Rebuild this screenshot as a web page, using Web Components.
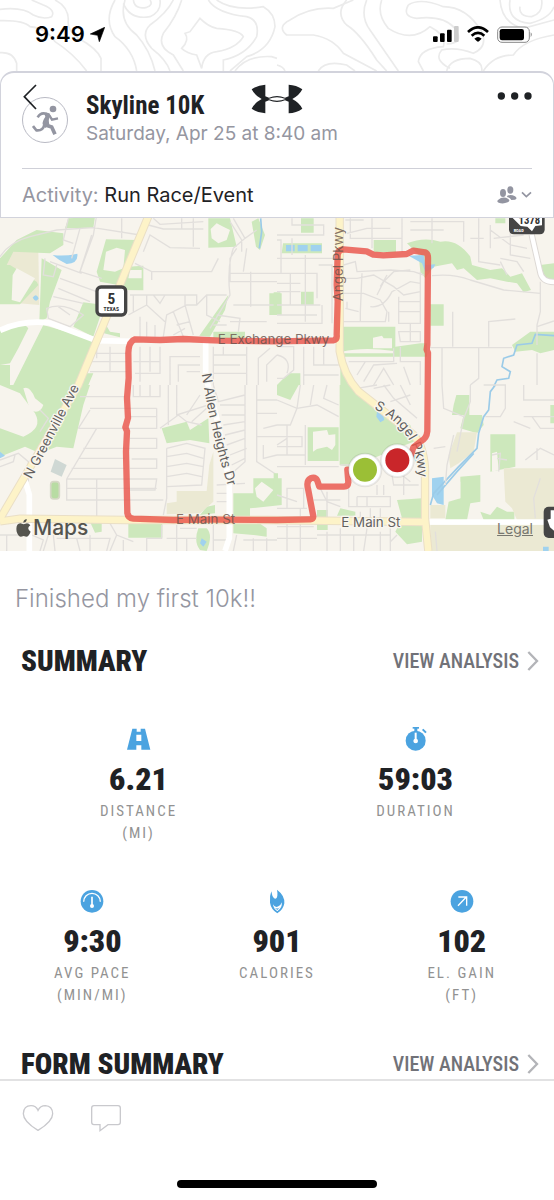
<!DOCTYPE html>
<html lang="en">
<head>
<meta charset="utf-8">
<meta name="viewport" content="width=device-width, initial-scale=1">
<title>Skyline 10K</title>
<style>
    html, body {
        margin: 0;
        height: 100%;
    }

    body {
        background: #fff;
        color: #1f2225;
        font-family: Inter, "Liberation Sans", sans-serif;
        --narrow: "Roboto Condensed", "Liberation Sans Narrow", "Open Sans Condensed", "Liberation Sans", sans-serif;
        --muted: #9596a1;
    }
</style>
</head>
<body>
<workout-page></workout-page>

<script>
// Attach an open shadow root and fill it from a template
function render(host, html) {
    const template = document.createElement('template');
    template.innerHTML = html;
    host.attachShadow({ mode: 'open' }).appendChild(template.content.cloneNode(true));
}

// Icon shapes, each with its own display size and viewBox
const icons = {
    location: [15, 15, '0 0 45 45', '<path d="M44 1 L28 44 L23 25 L1 21 Z" fill="#000" stroke="#000" stroke-width="2" stroke-linejoin="round"/>'],
    signal: [26, 16, '0 0 78 48', '<rect y="31" width="14" height="17" rx="3"/><rect x="21" y="22" width="14" height="26" rx="3"/><rect x="42" y="11" width="14" height="37" rx="3"/><rect x="63" width="14" height="48" rx="3" fill="#ccc"/>'],
    wifi: [22, 16, '0 0 66 48', '<g fill="none" stroke="#000" stroke-width="8"><path d="M3 18 Q33 -10 63 18"/><path d="M14 29 Q33 12 52 29"/></g><path d="M22 38 Q33 28 44 38 L36 46 Q33 48 30 46 Z"/>'],
    battery: [36, 17, '0 0 108 51', '<rect x="2" y="3" width="95" height="46" rx="13" fill="#fff" stroke="#8a8a8a" stroke-width="3"/><rect x="8" y="9" width="73" height="34" rx="7"/><path d="M101 19 Q108 25 101 34 Z" fill="#8a8a8a"/>'],
    back: [14, 26, '0 0 42 78', '<path d="M39 3 L4 38 L39 75" fill="none" stroke="#1f2225" stroke-width="5"/>'],
    run: [27, 31, '0 0 81 93', '<g fill="none" stroke="#9395a1"><path d="M17 37 Q28 17 52 30" stroke-width="8"/><path d="M52 31 L60 44 L78 40" stroke-width="7"/><path d="M38 59 L59 66 L69 88" stroke-width="11"/><path d="M37 59 Q33 78 13 76 L3 63" stroke-width="8"/></g><path d="M36 24 Q52 20 55 31 Q48 43 52 59 L40 69 L32 58 Q30 50 40 35 Z" fill="#9395a1"/><circle cx="63" cy="12" r="10" fill="#9395a1"/>'],
    armour: [52, 30, '0 0 156 90', '<path d="M2 16 Q20 3 43 2 V37 L54 41 Q78 31 102 41 L113 37 V2 Q136 3 154 16 Q145 34 124 45 Q145 56 154 74 Q136 87 113 88 V53 L102 49 Q78 59 54 49 L43 53 V88 Q20 87 2 74 Q11 56 32 45 Q11 34 2 16 Z M52 45 Q78 55 104 45 Q78 35 52 45 Z" fill="#1f2225" fill-rule="evenodd"/>'],
    dots: [35, 8, '0 0 105 24', '<g fill="#1f2225"><circle cx="13" cy="12" r="11"/><circle cx="53" cy="12" r="11"/><circle cx="93" cy="12" r="11"/></g>'],
    people: [20, 18, '0 0 60 54', '<g fill="#9395a1"><ellipse cx="40" cy="12" rx="9" ry="11"/><path d="M31 29 Q42 24 54 31 Q63 38 54 41 L43 42 Q39 34 30 33 Z"/><ellipse cx="18" cy="21" rx="9" ry="12"/><path d="M3 42 Q18 29 34 39 Q41 45 32 49 Q18 55 5 50 Q-2 47 3 42 Z"/></g>'],
    down: [11, 8, '0 0 33 24', '<path d="M3 4 L16 17 L30 4" fill="none" stroke="#9395a1" stroke-width="5"/>'],
    next: [12, 20, '0 0 36 60', '<path d="M4 3 L30 30 L4 57" fill="none" stroke="#b3b4b8" stroke-width="7"/>'],
    road: [26, 26, '0 0 78 78', '<path d="M19 8 H32 V17 H44 V8 H57 L73 71 H46 V58 H31 V71 H3 Z M31 26 V45 H46 V26 Z" fill="#4ba3e0" fill-rule="evenodd"/>'],
    stopwatch: [26, 26, '0 0 78 78', '<g fill="#4ba3e0"><circle cx="38" cy="44" r="30"/><rect x="29" y="3" width="19" height="5"/><rect x="34" y="6" width="9" height="12"/></g><path d="M59 10 L69 20" stroke="#4ba3e0" stroke-width="6"/><path d="M38 20 V44" stroke="#fff" stroke-width="6"/><circle cx="38" cy="45" r="7" fill="#fff"/>'],
    gauge: [26, 26, '0 0 78 78', '<circle cx="39" cy="40" r="34" fill="#4ba3e0"/><path d="M14 41 A25 25 0 0 1 64 41" fill="none" stroke="#fff" stroke-width="4"/><path d="M39 26 V54" stroke="#fff" stroke-width="5"/><circle cx="39" cy="54" r="6" fill="#fff"/>'],
    flame: [26, 26, '0 0 78 78', '<path d="M39 5 Q63 23 61 46 Q58 65 40 76 Q21 64 18 44 Q16 24 22 10 Q24 25 30 31 Q38 36 40 24 Q41 14 39 5 Z" fill="#4ba3e0"/><path d="M27 49 Q33 61 43 55 Q51 51 53 43 Q56 59 40 70 Q28 62 27 49 Z" fill="#fff"/><path d="M30 58 Q40 66 50 56 L40 66 Z" fill="#4ba3e0"/>'],
    climb: [26, 26, '0 0 78 78', '<circle cx="39" cy="40" r="34" fill="#4ba3e0"/><path d="M27 53 L52 27 M28 27 H53 V53" fill="none" stroke="#fff" stroke-width="4"/>'],
    heart: [32, 28, '0 0 96 84', '<path d="M48 79 Q4 52 4 29 Q5 5 27 5 Q42 5 48 19 Q55 5 70 5 Q91 6 92 29 Q92 52 48 79 Z" fill="none" stroke="#c9c9cd" stroke-width="4"/>'],
    comment: [32, 28, '0 0 96 84', '<path d="M12 5 H84 Q91 5 91 12 V55 Q91 62 84 62 H54 L30 80 V62 H12 Q5 62 5 55 V12 Q5 5 12 5 Z" fill="none" stroke="#c9c9cd" stroke-width="4"/>'],
    apple: [15, 18, '0 0 45 54', '<path d="M33 13 Q39 13 43 19 Q30 28 44 38 Q38 53 31 53 L23 51 L15 53 Q7 53 2 38 Q-2 15 13 13 L23 16 Z M22 11 Q22 2 32 0 Q33 10 22 11 Z" fill="#55554f"/>']
};

class AppIcon extends HTMLElement {
    constructor() {
        super();
        const [width, height, box, shape] = icons[this.getAttribute('name')];
        render(this, `
            <style>
                :host { display: block; flex: none; }
                svg { display: block; }
            </style>
            <svg width="${width}" height="${height}" viewBox="${box}" aria-hidden="true">${shape}</svg>
        `);
    }
}

class StatusBar extends HTMLElement {
    constructor() {
        super();
        render(this, `
            <style>
                :host {
                    display: flex;
                    align-items: center;
                    gap: 5px;
                    padding: 20px 21px 23px 35px;
                    line-height: 28px;
                    font-size: 22px;
                    font-weight: 600;
                    color: #000;
                }
                .right {
                    display: flex;
                    align-items: center;
                    gap: 8px;
                    margin-left: auto;
                }
            </style>
            <span>9:49</span>
            <app-icon name="location"></app-icon>
            <div class="right">
                <app-icon name="signal"></app-icon>
                <app-icon name="wifi"></app-icon>
                <app-icon name="battery"></app-icon>
            </div>
        `);
    }
}

// Contour lines behind the status bar
class TopoBackdrop extends HTMLElement {
    constructor() {
        super();
        render(this, `
            <style>
                :host { display: block; position: relative; }
                svg { position: absolute; inset: 0; width: 100%; height: 100%; }
                div { position: relative; }
            </style>
            <svg viewBox="0 0 1662 213" preserveAspectRatio="xMidYMin slice" aria-hidden="true">
                <g fill="none" stroke="#ebebeb" stroke-width="5">
                    <path d="M0 28 Q70 20 100 45 Q130 60 155 50 Q168 30 130 15 L95 0"/>
                    <path d="M165 0 Q205 20 205 60 Q200 90 235 115 Q290 145 303 175 V213"/>
                    <path d="M0 62 Q70 60 90 80 Q140 85 165 125 Q220 160 260 213"/>
                    <path d="M0 158 Q40 155 50 190 V213"/>
                    <path d="M345 0 Q310 60 345 110 Q400 150 410 213"/>
                    <path d="M375 0 Q355 65 410 105 Q450 150 465 213"/>
                    <path d="M400 0 Q405 30 440 22 Q460 15 450 0"/>
                    <path d="M370 10 Q390 60 450 50 Q485 35 480 0"/>
                    <path d="M520 0 Q500 40 450 75 Q420 105 455 145 Q500 180 510 213"/>
                    <path d="M545 0 Q530 50 490 100 Q470 140 520 165 L550 213"/>
                    <path d="M600 55 Q585 75 570 95 L555 100 Q570 120 545 145 Q560 160 590 165 L605 205 Q610 160 650 155 Q710 145 730 110 Q720 90 650 85 Q625 80 600 55 Z"/>
                    <path d="M625 0 Q650 40 740 50 Q780 60 770 110 Q740 165 670 180 L670 213"/>
                    <path d="M650 0 Q700 35 790 20 Q825 40 825 80 Q810 150 740 170 L690 213"/>
                    <path d="M705 213 Q740 165 815 170 L831 175"/>
                    <path d="M870 60 Q930 20 1000 25 L1060 0 M870 60 Q830 80 860 105 L940 105 Q1000 115 1030 160 L1130 213"/>
                    <path d="M1040 0 Q1005 40 1040 75 Q1080 100 1130 180 L1160 213"/>
                    <path d="M1100 0 Q1080 50 1110 90 L1195 213"/>
                    <path d="M1145 0 Q1130 45 1165 85 Q1235 130 1290 80 Q1340 105 1330 140 Q1260 145 1255 185 L1270 213"/>
                    <path d="M1225 15 Q1260 -8 1330 20 Q1400 20 1445 95 Q1465 140 1420 160 Q1370 140 1325 150 Q1300 180 1350 205"/>
                    <path d="M1225 15 Q1205 50 1250 55 Q1330 45 1365 85 Q1395 130 1340 132"/>
                    <path d="M1500 0 Q1505 70 1570 85 L1662 60"/>
                    <path d="M1530 0 Q1520 65 1590 70 Q1650 55 1662 20"/>
                    <path d="M1560 20 Q1555 50 1595 50 Q1630 40 1625 0"/>
                    <path d="M831 195 Q850 200 855 213 M955 213 Q975 180 1040 195 L1065 213"/>
                    <path d="M1340 213 Q1350 175 1410 175 Q1450 185 1445 213 M1450 213 Q1480 165 1540 165 Q1570 120 1662 105"/>
                </g>
            </svg>
            <div><slot></slot></div>
        `);
    }
}

class WorkoutHeader extends HTMLElement {
    constructor() {
        super();
        render(this, `
            <style>
                :host {
                    display: block;
                    position: relative;
                    padding: 0 21px;
                    background: #fff;
                    border: 1px solid #d2d3dc;
                    border-top-width: 2px;
                    border-radius: 14px 14px 0 0;
                }
                button {
                    padding: 0;
                    border: 0;
                    background: none;
                    cursor: pointer;
                }
                .top {
                    display: flex;
                    align-items: flex-start;
                    gap: 18px;
                    padding: 19px 0 20px;
                    border-bottom: 1px solid #cfd0d8;
                }
                .avatar {
                    display: flex;
                    align-items: center;
                    justify-content: center;
                    box-sizing: border-box;
                    width: 46px;
                    height: 46px;
                    margin-top: 5px;
                    border: 1px solid #b9bac4;
                    border-radius: 50%;
                }
                .back {
                    position: absolute;
                    top: 11px;
                    left: 22px;
                }
                .logo {
                    position: absolute;
                    top: 11px;
                    left: 50%;
                    margin-left: -26px;
                }
                .text { flex: 1; }
                h1 {
                    margin: 0;
                    font: bold 25px/28px var(--narrow);
                }
                p {
                    margin: 0;
                    font-size: 19px;
                    line-height: 28px;
                    color: var(--muted);
                }
                .activity {
                    display: flex;
                    align-items: center;
                    padding: 12px 0 8px;
                    font-size: 20px;
                    line-height: 28px;
                    color: var(--muted);
                }
                .activity b {
                    font-weight: 400;
                    color: #1f2225;
                }
                .privacy {
                    display: flex;
                    align-items: center;
                    gap: 4px;
                    margin-left: auto;
                }
            </style>
            <div class="top">
                <div class="avatar"><app-icon name="run"></app-icon></div>
                <div class="text">
                    <h1>Skyline 10K</h1>
                    <p>Saturday, Apr 25 at 8:40 am</p>
                </div>
                <button aria-label="More"><app-icon name="dots"></app-icon></button>
            </div>
            <button class="back" aria-label="Back"><app-icon name="back"></app-icon></button>
            <app-icon class="logo" name="armour"></app-icon>
            <div class="activity">
                <span>Activity: <b>Run Race/Event</b></span>
                <button class="privacy" aria-label="Privacy">
                    <app-icon name="people"></app-icon>
                    <app-icon name="down"></app-icon>
                </button>
            </div>
        `);
    }
}

// The map is drawn in units of a third of a pixel
class RouteMap extends HTMLElement {
    constructor() {
        super();
        render(this, `
            <style>
                :host { display: block; position: relative; color: #55554f; }
                svg { display: block; width: 100%; }
                .brand {
                    display: flex;
                    align-items: center;
                    position: absolute;
                    left: 16px;
                    bottom: 8px;
                    gap: 2px;
                    font-size: 21px;
                    line-height: 30px;
                    font-weight: 500;
                }
                a {
                    position: absolute;
                    right: 21px;
                    bottom: 12px;
                    color: #77776f;
                    font-size: 14px;
                    line-height: 20px;
                }
                .park { fill: #cde8bc; }
                .water { fill: #a0d2ef; }
                .field { fill: #ebe9d3; }
                .plain { fill: #f7f4ed; }
                .minor { fill: none; stroke: #e2dfdc; stroke-width: 4; }
                .stream { fill: none; stroke: #9bcbe8; stroke-width: 5; }
                .casing { fill: none; stroke: #eadfc6; stroke-width: 25; }
                .major { fill: none; stroke: #fdf3c8; stroke-width: 19; }
                .street { fill: none; stroke: #fff; stroke-width: 17; }
                .names {
                    font-size: 40px;
                    fill: #62605e;
                    stroke: #f9f6ef;
                    stroke-width: 8;
                    paint-order: stroke;
                    stroke-linejoin: round;
                }
                .names .over { stroke: none; fill: #65504a; fill-opacity: .8; }
                .shield { font-family: var(--narrow); font-weight: bold; text-anchor: middle; }
            </style>
            <svg viewBox="0 0 1662 999" role="img" aria-label="Map of the run">
                <rect class="plain" width="1662" height="999"/>
                <g transform="translate(0 -9)">
                    <path class="field" d="M40 105 L115 110 L118 270 L0 260 V150 Z"/>
                    <path class="park" d="M0 130 L50 75 L110 45 L190 55 L190 90 L150 115 L40 110 L0 190 Z M205 10 L285 5 L280 38 L195 40 Z"/>
                    <path class="park" d="M0 150 L30 150 L110 200 L115 210 L60 268 L0 268 Z M125 130 L185 165 L150 260 L140 310 L118 320 Z"/>
                    <path class="park" d="M318 73 L410 75 L355 210 L300 200 L290 170 Z M385 155 L430 152 V226 L355 225 Z M625 10 L690 10 L710 95 L625 98 Z M775 10 L795 60 L780 105 L768 95 L755 20 Z"/>
                    <path class="park" d="M250 262 L312 270 L280 365 L220 335 Z M0 345 L70 325 L85 340 L55 400 L30 445 L0 450 Z M130 330 L285 375 L235 510 L40 510 L85 420 Z M0 450 L30 450 V510 H0 Z M245 475 H280 L265 510 H230 Z"/>
                    <path class="park" d="M808 235 H845 V300 H808 Z M685 240 L675 285 L630 365 L598 362 Z M300 352 L318 330 L330 350 L360 355 V367 Z M640 350 H735 V370 H640 Z"/>
                    <path class="plain" d="M318 110 L350 98 L375 105 L370 160 L345 170 L310 165 Z M632 42 L650 25 L670 35 L690 45 L680 75 L655 85 L635 70 Z M38 180 L50 160 L105 190 L60 262 L35 255 Z M390 165 L425 165 V190 H385 Z"/>
                    <path class="water" d="M158 120 Q195 125 232 116 Q236 145 200 147 Q175 135 158 120 Z M98 248 Q108 232 116 250 Q108 265 98 248 Z"/>
                    <path class="stream" d="M782 10 L785 50 L778 100"/>
                    <path class="minor" d="M0 125 Q30 80 90 65 L170 45 L280 38 L420 60 M205 10 L190 75 L220 85 M240 40 L215 130 M275 60 L240 170 L305 190 M150 140 L245 175 M135 130 L130 180 L160 185 L170 150 M180 190 L290 230 M175 220 L270 260 M160 245 L250 265 M140 280 Q190 260 250 300 L210 335 L145 310 Z M175 275 L210 300 M290 0 L280 60 L240 170 M365 10 V70"/>
                    <path class="minor" d="M445 30 L490 42 H610 M460 10 L480 28 L610 20 M430 110 L450 60 L510 98 L600 100 M405 145 L455 170 L635 170 L655 130 M455 170 V195 M545 10 V42 M580 10 V95 M700 100 Q680 160 690 240 L630 340 M700 100 L735 70 L770 45 M735 70 L700 10 M710 100 L690 130 V200 H831 M740 100 L730 170 M690 175 H831 M752 170 V275 M700 270 H831 M690 20 L725 75 V110"/>
                    <path class="minor" d="M390 240 H590 V270 H560 L500 300 L490 365 M400 240 V290 M385 300 L440 270 L495 320 M440 240 V270 M460 240 L480 265 L495 240 M555 240 V270 L580 360 M420 365 V305 M440 365 V320 M465 365 V330 M520 290 L550 365 M590 270 L620 240 H680 M620 240 V300 L660 320 M650 300 L720 310 L715 350 M680 330 H640 M530 330 L570 320 M690 320 H800 M520 360 L555 340"/>
                    <path class="minor" d="M270 440 H380 M280 415 H380 M290 395 V430 M330 395 V470 M270 470 H380 M420 395 V500 M450 395 V470 M480 395 V475 H405 M510 510 V425 H600 M535 500 V450 H600 M560 470 H600 M400 440 H480 M640 395 V510 M640 420 H740 M670 395 V420 M640 450 H720 M640 475 H740 M740 395 V510 M775 510 V430 L810 400 M800 500 V450 L831 420"/>
                </g>
                <g transform="translate(831 -9)">
                    <path class="park" d="M72 10 H110 V53 H72 Z M18 85 H135 V115 H14 Z M72 230 H110 V270 H72 Z M-10 232 H10 V295 H-10 Z M290 75 H357 V112 H290 Z M655 10 H685 V25 H655 Z M790 150 L831 145 V198 L800 190 Z"/>
                    <path class="park" d="M390 85 Q440 65 490 80 Q540 70 580 125 L585 150 L640 165 L675 160 L700 185 L735 175 L762 225 L740 232 L720 205 L690 200 L640 190 L600 195 L560 160 L540 165 L525 145 L470 155 L445 190 L430 170 L425 120 Z"/>
                    <path class="park" d="M195 335 H355 V395 L430 385 H450 V425 H200 Z M460 268 H500 V332 H460 Z M705 390 L760 350 H831 V405 L790 415 L765 405 L715 410 Z M20 490 L40 475 H70 V510 H0 Z M190 430 L240 510 H190 Z"/>
                    <path class="plain" d="M288 368 L315 362 L320 370 H345 V400 H288 Z M195 410 Q260 395 350 408 L350 415 H195 Z"/>
                    <path class="water" d="M27 90 H53 V109 H27 Z M62 90 H92 V109 H62 Z M101 90 H133 V109 H101 Z M395 122 L440 120 L445 150 L475 148 L470 158 L445 170 L435 145 Z"/>
                    <path class="stream" d="M831 362 L775 358 L765 385 L720 390 L710 420 L680 430 L675 455 L700 470 L695 490 L660 495 L650 515"/>
                    <path class="minor" d="M45 10 V30 H140 V60 H0 M0 75 H12 V175 H0 M40 175 V270 M85 120 V320 M0 130 H170 M0 175 H120 V250 M0 230 H70 M0 270 H130 M0 300 H120 M0 325 H135 V270 M45 70 V120 M0 205 H70 M125 150 H165 V325 M220 10 V70 H375 M205 15 H260 M285 10 V100 M375 10 V110 M400 45 H500 M465 10 V85 M400 20 H560 V80 M210 55 L270 40 H340"/>
                    <path class="minor" d="M200 150 L235 140 L240 170 L340 165 L410 170 L440 180 M200 190 H240 L290 180 L350 215 L380 240 L430 230 M200 235 H260 L310 255 L330 290 L325 320 H200 M205 280 L245 290 M255 175 L250 290 V320 M280 275 Q320 280 345 230 L400 200 L430 205 M335 290 V320 M365 245 V325 H430 V170 M365 260 H430 M365 290 H430 M300 240 L320 200 L350 170 L400 165 M310 215 L330 180 M365 350 H430 V380 H370 Z M400 325 V380 M210 260 V280"/>
                    <path class="minor" d="M465 182 Q530 175 580 195 L680 225 L790 235 M790 200 V290 L780 330 V390 M460 398 H705 M527 290 V395 M635 395 V320 L715 312 M780 335 L831 318 M605 10 V140 L670 150 M580 70 H620 M640 45 L700 90 L750 100 M650 70 L740 60 M700 40 V120 L760 130 M640 30 V100 M670 130 L720 140 L740 170 M670 140 L690 180 M495 400 V510 M605 400 V490 L580 510 M780 415 V510"/>
                    <path class="minor" d="M0 395 H50 V465 L20 490 H0 M80 395 V510 M110 395 V450 H185 M0 420 Q45 430 30 475 M80 480 H185 M140 400 V450 M215 440 H350 V400 M240 480 L265 440 M260 500 L290 450 L360 445 M290 510 L320 460 L350 510 M370 395 V440 H430 V510 M380 455 L400 510"/>
                </g>
                <g transform="translate(0 501)">
                    <path class="park" d="M0 0 H270 L250 60 L220 190 L170 185 L120 205 L75 185 L0 215 V130 L70 155 Q130 130 105 85 L60 25 L0 0 Z M485 130 L560 110 L570 135 L625 100 L628 175 L570 165 L500 175 Z"/>
                    <path class="park" d="M385 415 H487 V458 H385 Z M270 410 H305 V440 L285 443 Z M700 325 H760 V280 H845 V360 L750 370 L750 395 L800 430 L800 455 L760 450 L700 445 Z M600 390 L620 365 L645 360 V385 Z M595 430 Q580 470 600 495 L620 498 Q640 450 620 430 Z"/>
                    <path class="field" d="M500 355 L530 350 V318 H620 L628 240 L640 200 L640 350 L600 385 L500 388 Z"/>
                    <path class="plain" d="M70 10 Q90 0 105 40 L130 60 Q120 90 90 75 Z M765 310 L785 290 L820 315 L790 350 L770 335 Z"/>
                    <path d="M165 222 L200 240 L185 275 L152 260 Z" fill="#cfd8d4"/>
                    <rect x="152" y="290" width="26" height="52" rx="9" fill="#b8dca3" stroke="#d6d8c6" stroke-width="5"/>
                    <path class="water" d="M605 460 L620 470 L610 485 L600 475 Z M0 200 L15 212 L0 220 Z"/>
                    <path class="minor" d="M120 75 L145 100 L120 140 M240 35 H375 M270 70 H470 M235 130 L270 75 M235 130 H470 V70 M390 95 H470 M250 190 H470 V160 H390 M235 220 H375 M395 222 H470 V250 H390 M215 250 H375 M200 282 H470 L465 315 H390 M200 282 L290 130 M200 282 V345 H490 M290 282 V395 M200 310 H470 M400 0 V35 H480 V0 M420 0 V35 M450 0 V35 M505 0 V120 M530 0 V90 L625 60 V0"/>
                    <path class="minor" d="M480 130 L535 90 L560 110 L605 120 M500 190 L560 175 L615 190 L605 300 L500 305 M500 215 L560 205 L610 220 M500 245 L560 235 L610 245 M500 275 L560 265 L605 275 M500 190 V340 L490 390 M560 90 L600 30 M575 110 L620 70 M640 0 L655 50 L735 30 M660 60 L735 60 M665 90 L735 90 M670 120 L735 110 M675 150 L735 135 M680 180 L735 160 M690 210 L740 190 M695 240 L735 220 M735 0 V230 L690 270 M770 0 V230 L831 270 M770 45 H831 M770 85 H831 M790 130 L831 120 M770 155 H831 M790 180 V220 L831 210 M650 300 L735 295 M650 325 H690 M650 350 H690"/>
                    <path class="minor" d="M0 225 L55 205 L85 230 V290 M0 245 L40 230 L45 210 M0 450 H60 M20 450 V498 M95 450 L130 465 L120 498 M130 498 L145 450 M160 450 L165 498 M170 460 H330 L320 498 M230 460 L240 498 M270 450 V498 M330 415 L350 450 L400 470 M350 450 L330 498 M370 465 V498 M440 498 V460 H485 V420 M500 460 H590 M530 420 V498 M560 460 V498 M540 430 H590 M640 420 V498 M640 465 H680 M710 450 L700 498 M730 465 H831 M760 460 V498 M800 460 V498"/>
                </g>
                <g transform="translate(831 501)">
                    <path class="park" d="M0 0 H65 L40 45 L0 30 Z M188 0 H235 L290 50 L400 120 L410 170 L385 180 L300 215 L215 245 L188 240 Z M92 127 H185 V228 H92 Z M538 30 H577 V90 H525 L530 60 Z M560 90 H615 L620 120 L600 145 L550 130 Z"/>
                    <path class="park" d="M640 148 H715 V245 L640 260 Z M550 275 L610 270 V350 L580 355 L570 405 H505 L515 350 L550 340 Z M360 345 L435 340 V470 L390 478 L355 440 L375 400 Z M120 375 H152 V435 H120 Z M190 370 L235 380 V392 H180 Z M610 380 L640 390 L660 365 L690 380 H712 V405 H620 Z M820 60 H831 V115 H820 Z M-10 265 H3 V355 H-10 Z"/>
                    <path class="field" d="M680 250 H831 V405 H720 L705 370 L685 350 Z M460 420 H831 V498 H460 Z M540 142 H600 L590 200 L545 235 L520 250 L515 210 Z M460 360 L505 360 V400 H460 Z"/>
                    <path class="plain" d="M108 140 L150 135 L155 150 L175 148 V180 L165 195 L150 185 L120 192 L108 200 Z M645 205 L660 200 L665 255 L645 260 Z M515 290 H550 V340 H515 Z"/>
                    <path class="water" d="M300 80 L318 90 L322 105 L310 112 L298 95 Z M465 280 L500 275 V360 L480 355 L465 330 Z M798 485 H815 V498 H798 Z M400 190 L430 210 L420 240 Z"/>
                    <path class="stream" d="M655 0 L640 20 L635 75 L620 95 L605 145 L600 190 L545 245 L470 325 L460 360"/>
                    <path class="stream" d="M590 205 L540 260 L480 330"/>
                    <path class="minor" d="M0 45 L60 70 L120 60 L185 95 M70 0 L60 70 L40 120 H0 M110 0 L100 60 M150 0 L140 40 L185 60 M85 120 V240 M0 155 H75 V185 H0 M0 210 H85 M0 180 L30 160 M0 245 H185 M30 120 V210 M240 10 L300 0 M320 0 L350 40 L420 100 M290 10 L340 0 M370 0 L400 60 M340 50 L400 30 M495 0 L500 70 L560 95 M530 150 L510 240 L505 300 M470 190 L505 185 M580 0 V50 L560 100 L540 200"/>
                    <path class="minor" d="M620 0 H685 V70 L670 95 H625 M740 95 H831 M765 95 L790 130 H831 M745 225 L790 190 L831 210 M780 190 V225 M740 0 V45 H831 M710 110 L760 130 M660 220 L690 225 M790 280 L770 340 L775 400 M645 210 L670 205 L665 260 M190 240 H340 L350 300 H425 M215 300 V365 H340 V335 H240 M300 300 V330 M240 335 V365 M270 335 V365 M320 300 V330 M350 250 L400 290 M380 250 V330 M30 310 H80 V370 H30 Z M0 330 L60 350 M0 370 H90 M130 310 L150 350 L190 365 M110 345 H190 M150 320 V400"/>
                    <path class="minor" d="M0 425 H110 M30 410 V498 M70 410 V498 M0 460 H120 M150 440 V498 M120 450 H340 M190 430 V498 M230 450 V498 M270 430 L260 498 M310 440 V498 M340 420 V498 M360 450 L340 470 M0 395 H100 M70 370 V400 M250 380 V400 M280 370 V400 M310 370 V400 M480 498 L475 440"/>
                </g>

                <path class="street" d="M0 337 Q70 305 150 315 L290 368 L400 370 M617 370 L617 475 L650 600 L688 790 V960 L675 999 M1280 912 H1662"/>
                <path class="street" d="M88 999 V830 L70 770" stroke-width="12"/>
                <path d="M1595 50 L1620 160 Q1625 192 1662 192" fill="none" stroke="#ddd9d5" stroke-width="19"/>
                <path d="M1595 50 L1620 160 Q1625 192 1662 192" fill="none" stroke="#fff" stroke-width="13"/>
                <path class="casing" d="M445 -5 L235 501 L0 902 M0 910 L60 902 L380 906 H800 L1275 912 M1019 -5 V400 Q1030 470 1075 520 L1240 650 Q1270 680 1275 750 V900 L1285 999"/>
                <path class="major" d="M445 -5 L235 501 L0 902 M0 910 L60 902 L380 906 H800 L1275 912 M1019 -5 V400 Q1030 470 1075 520 L1240 650 Q1270 680 1275 750 V900 L1285 999"/>

                <g class="names">
                    <path id="greenville" d="M94 784 Q160 660 250 485" fill="none" stroke="none"/>
                    <text><textPath href="#greenville">N Greenville Ave</textPath></text>
                    <path id="allen" d="M605 468 Q635 660 695 840" fill="none" stroke="none"/>
                    <text><textPath href="#allen">N Allen Heights Dr</textPath></text>
                    <path id="angel" d="M1122 572 Q1260 640 1254 790" fill="none" stroke="none"/>
                    <text><textPath href="#angel">S Angel Pkwy</textPath></text>
                    <text x="1024" y="926">E Main St</text>
                </g>

                <path d="M1042 755 L1045 793 Q1044 806 1032 806 H958 L952 788 Q946 776 932 781 Q918 788 924 812 L936 875 L940 895 Q940 905 930 904 L831 906 L640 905 L520 906 L400 902 Q384 900 382 885 L378 700 L381 640 L376 628 L384 600 L381 540 L386 480 L385 405 Q386 370 405 364 L480 366 L550 363 L660 368 L831 370 L1000 367 Q1012 365 1010 350 L1013 250 L1010 200 L1013 110 Q1014 95 1030 94 L1100 100 L1120 110 L1150 112 L1220 108 L1240 98 L1275 103 Q1284 106 1284 120 L1282 380 L1280 395 L1284 405 L1282 640 Q1280 662 1262 670 L1240 688 L1230 720" fill="none" stroke="#e9544a" stroke-opacity=".82" stroke-width="19" stroke-linejoin="round" stroke-linecap="round"/>

                <g class="names">
                    <text class="over" x="653" y="378">E Exchange Pkwy</text>
                    <text class="over" x="528" y="919">E Main St</text>
                    <text class="over" transform="translate(1028 250) rotate(-90)">Angel Pkwy</text>
                </g>

                <g fill="#fff" stroke="#000" stroke-opacity=".08" stroke-width="6">
                    <circle cx="1095" cy="756" r="49"/>
                    <circle cx="1192" cy="728" r="49"/>
                </g>
                <circle cx="1095" cy="755" r="36" fill="#9bbf36"/>
                <circle cx="1192" cy="727" r="36" fill="#c9262a"/>

                <rect x="291" y="207" width="86" height="84" rx="12" fill="#fff" stroke="#454545" stroke-width="10"/>
                <g class="shield">
                    <text x="334" y="258" font-size="46" fill="#333">5</text>
                    <text x="334" y="278" font-size="17" fill="#333">TEXAS</text>
                </g>
                <path d="M1527 0 H1634 V34 Q1634 49 1619 49 H1542 Q1527 49 1527 34 Z" fill="#454545"/>
                <path d="M1538 0 H1626 V22 L1606 24 L1596 40 L1582 26 L1562 24 Z" fill="#fff"/>
                <g class="shield">
                    <text x="1588" y="18" font-size="32" fill="#333">1378</text>
                    <text x="1556" y="42" font-size="13" fill="#fff">ROAD</text>
                </g>
                <rect x="1631" y="866" width="60" height="94" rx="15" fill="#454545"/>
                <path d="M1642 905 L1652 902 V877 H1662 V938 L1650 928 Z" fill="#fff"/>
            </svg>
            <div class="brand"><app-icon name="apple"></app-icon>Maps</div>
            <a href="#legal">Legal</a>
        `);
    }
}

class SectionHeading extends HTMLElement {
    constructor() {
        super();
        render(this, `
            <style>
                :host {
                    display: flex;
                    align-items: center;
                    justify-content: space-between;
                    padding: 0 15px 0 21px;
                    line-height: 32px;
                    font-family: var(--narrow);
                }
                h2 {
                    margin: 0;
                    font-size: 29px;
                    font-weight: 900;
                }
                a {
                    display: flex;
                    align-items: center;
                    gap: 8px;
                    color: #717278;
                    font-size: 20px;
                    font-weight: 500;
                    text-decoration: none;
                }
            </style>
            <h2><slot></slot></h2>
            <a href="#analysis">VIEW ANALYSIS <app-icon name="next"></app-icon></a>
        `);
    }
}

class StatItem extends HTMLElement {
    constructor() {
        super();
        render(this, `
            <style>
                :host {
                    display: flex;
                    flex: 1;
                    flex-direction: column;
                    align-items: center;
                    text-align: center;
                    font-family: var(--narrow);
                }
                .value {
                    margin: 9px 0 3px;
                    font-size: 32px;
                    line-height: 36px;
                    font-weight: 900;
                }
                .label {
                    color: #929292;
                    font-size: 15px;
                    line-height: 22px;
                    letter-spacing: 2px;
                }
            </style>
            <app-icon name="${this.getAttribute('icon')}"></app-icon>
            <div class="value">${this.getAttribute('value')}</div>
            <div class="label"><slot></slot></div>
        `);
    }
}

class StatRow extends HTMLElement {
    constructor() {
        super();
        render(this, `
            <style>
                :host { display: flex; align-items: flex-start; }
            </style>
            <slot></slot>
        `);
    }
}

class ActionBar extends HTMLElement {
    constructor() {
        super();
        render(this, `
            <style>
                :host {
                    display: block;
                    padding-bottom: 12px;
                    border-top: 2px solid #e2e2e3;
                    background: #fff;
                }
                .actions {
                    display: flex;
                    gap: 36px;
                    padding: 23px 22px 48px;
                }
                button {
                    padding: 0;
                    border: 0;
                    background: none;
                    cursor: pointer;
                }
                .home {
                    width: 36%;
                    height: 8px;
                    margin: 0 auto;
                    border-radius: 4px;
                    background: #000;
                }
            </style>
            <div class="actions">
                <button aria-label="Like"><app-icon name="heart"></app-icon></button>
                <button aria-label="Comment"><app-icon name="comment"></app-icon></button>
            </div>
            <div class="home"></div>
        `);
    }
}

class WorkoutPage extends HTMLElement {
    constructor() {
        super();
        render(this, `
            <style>
                :host {
                    display: flex;
                    flex-direction: column;
                    height: 100vh;
                }
                main {
                    flex: 1;
                    min-height: 0;
                    overflow-y: auto;
                    scrollbar-width: none;
                }
                .note {
                    margin: 32px 15px 30px;
                    font-size: 24px;
                    line-height: 32px;
                    font-weight: 300;
                    color: var(--muted);
                }
                .stats {
                    display: flex;
                    flex-direction: column;
                    gap: 44px;
                    padding: 49px 0 42px;
                }
            </style>
            <topo-backdrop><status-bar></status-bar></topo-backdrop>
            <workout-header></workout-header>
            <main>
                <route-map></route-map>
                <p class="note">Finished my first 10k!!</p>
                <section-heading>SUMMARY</section-heading>
                <div class="stats">
                    <stat-row>
                        <stat-item icon="road" value="6.21">DISTANCE<br>(MI)</stat-item>
                        <stat-item icon="stopwatch" value="59:03">DURATION</stat-item>
                    </stat-row>
                    <stat-row>
                        <stat-item icon="gauge" value="9:30">AVG PACE<br>(MIN/MI)</stat-item>
                        <stat-item icon="flame" value="901">CALORIES</stat-item>
                        <stat-item icon="climb" value="102">EL. GAIN<br>(FT)</stat-item>
                    </stat-row>
                </div>
                <section-heading>FORM SUMMARY</section-heading>
            </main>
            <action-bar></action-bar>
        `);
    }
}

// Define the custom elements
customElements.define('app-icon', AppIcon);
customElements.define('status-bar', StatusBar);
customElements.define('topo-backdrop', TopoBackdrop);
customElements.define('workout-header', WorkoutHeader);
customElements.define('route-map', RouteMap);
customElements.define('section-heading', SectionHeading);
customElements.define('stat-item', StatItem);
customElements.define('stat-row', StatRow);
customElements.define('action-bar', ActionBar);
customElements.define('workout-page', WorkoutPage);
</script>
</body>
</html>
